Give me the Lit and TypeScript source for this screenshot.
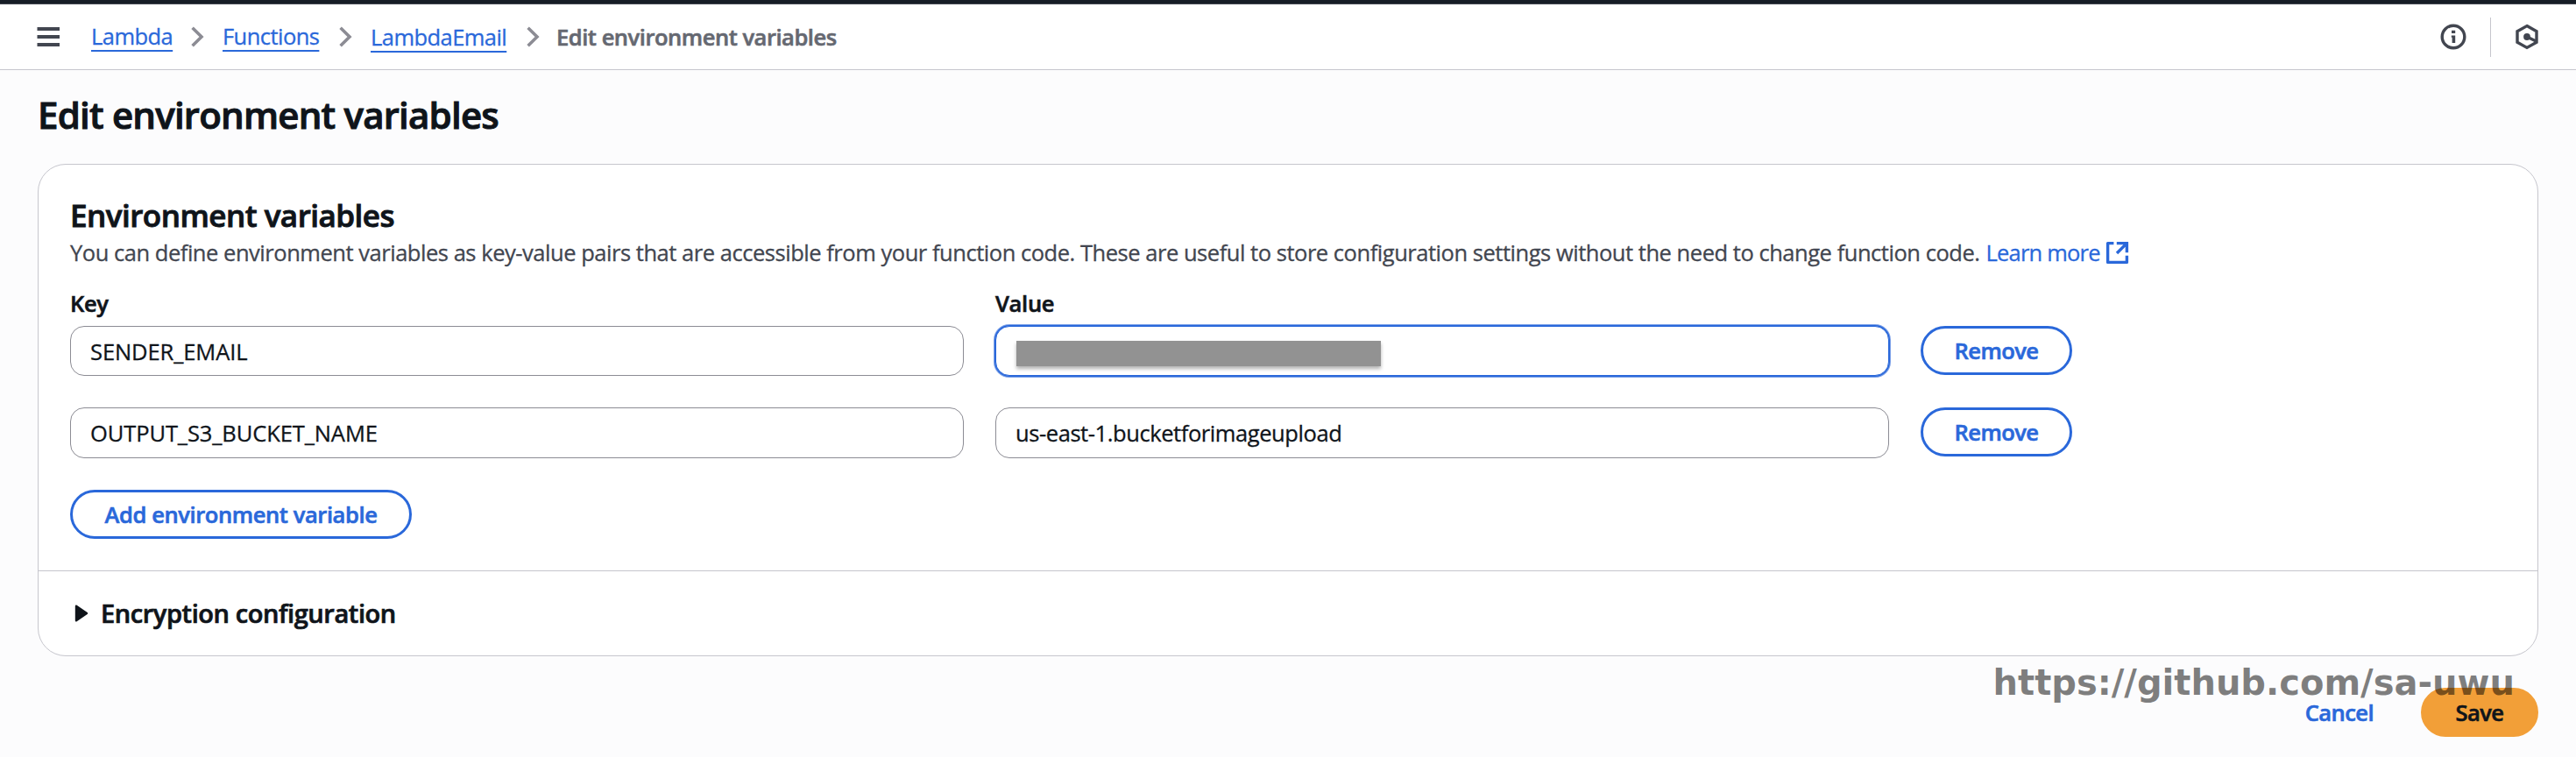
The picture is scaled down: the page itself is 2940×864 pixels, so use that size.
import { LitElement, html, css, nothing } from 'lit';
import { customElement, state } from 'lit/decorators.js';
import { classMap } from 'lit/directives/class-map.js';

interface EnvVariable {
  key: string;
  value: string;
  masked?: boolean;
  focused?: boolean;
}

const chevron = html`<svg class="chevron" width="18" height="28" viewBox="0 0 18 28" aria-hidden="true">
  <path d="M3.6 3.8 14 14 3.6 24.2" fill="none" stroke="#8c8c94" stroke-width="3.6" />
</svg>`;

@customElement('top-bar')
export class TopBar extends LitElement {
  static styles = css`
    :host {
      display: flex;
      align-items: center;
      box-sizing: border-box;
      height: 80px;
      padding: 0 42px 0 42px;
      background: #fff;
      border-top: 4px solid #161d26;
      border-bottom: 1px solid #c6c6cd;
      box-shadow: inset 0 1px 0 #424650;
    }
    .menu {
      display: block;
      margin: 1px 35px 0 0;
    }
    .crumbs {
      display: grid;
      grid-template-columns: 92px 58px 111px 58px 156px 58px auto;
      align-items: center;
      flex: 1;
      line-height: 40px;
      white-space: nowrap;
    }
    .crumb {
      color: #2a68da;
      letter-spacing: -0.55px;
      text-decoration: underline;
      text-decoration-thickness: 2px;
      text-underline-offset: 6px;
      text-decoration-skip-ink: none;
      -webkit-text-stroke: 0.3px currentColor;
    }
    .raised {
      margin-bottom: 2px;
    }
    .current {
      margin-left: -2px;
      color: #656871;
      font-weight: 600;
      letter-spacing: -0.46px;
      -webkit-text-stroke: 0.6px currentColor;
    }
    .chevron {
      display: block;
      justify-self: center;
    }
    .tools {
      display: flex;
      align-items: center;
      margin-top: 1px;
    }
    .tools svg {
      display: block;
    }
    .rule {
      width: 1px;
      height: 45px;
      margin: 0 27px;
      background: #c6c6cd;
    }
  `;

  render() {
    return html`
      <svg class="menu" width="27" height="26" viewBox="0 0 27 26">
        <path d="M.5 4h25.5M.5 13h25.5M.5 22h25.5" stroke="#424650" stroke-width="4" />
      </svg>
      <nav class="crumbs">
        <a class="crumb raised">Lambda</a>${chevron}
        <a class="crumb raised">Functions</a>${chevron}
        <a class="crumb">LambdaEmail</a>${chevron}
        <span class="current">Edit environment variables</span>
      </nav>
      <div class="tools">
        <svg width="30" height="30" viewBox="0 0 30 30">
          <circle cx="15" cy="15" r="12.8" fill="none" stroke="#424650" stroke-width="3.4" />
          <path d="M13 7.8h4.2v3.2H13zM12.8 13.4h4.4V22h-3.6v-6.2h-.8z" fill="#424650" />
        </svg>
        <div class="rule"></div>
        <svg width="28" height="30" viewBox="0 0 28 30">
          <path d="M14 2.6 25 8.8V21.2L14 27.4 3 21.2V8.8z" fill="none" stroke="#424650" stroke-width="3.4" />
          <circle cx="14" cy="15" r="3.9" fill="#424650" />
          <path d="M14 15l10.4 5" stroke="#424650" stroke-width="3.4" />
        </svg>
      </div>
    `;
  }
}

@customElement('app-root')
export class AppRoot extends LitElement {
  static styles = css`
    :host {
      display: block;
      position: relative;
      box-sizing: border-box;
      height: 864px;
      overflow: hidden;
      background: #fcfcfd;
      color: #0f141a;
      font-family: 'Open Sans', 'Noto Sans', sans-serif;
      font-size: 25.5px;
      line-height: 40px;
    }
    .page {
      padding: 23px 43px 0;
    }
    h1,
    h2,
    p {
      margin: 0;
    }
    h1 {
      font-size: 42px;
      font-weight: 600;
      line-height: 56px;
      letter-spacing: -0.78px;
      -webkit-text-stroke: 1px currentColor;
    }
    .card {
      box-sizing: border-box;
      margin-top: 28px;
      background: #fff;
      border: 1px solid #c6c6cd;
      border-radius: 32px;
    }
    .body {
      padding: 36px 36px;
    }
    h2 {
      font-size: 35px;
      font-weight: 600;
      line-height: 44px;
      letter-spacing: -0.5px;
      -webkit-text-stroke: 0.9px currentColor;
    }
    .intro {
      display: flex;
      align-items: center;
      gap: 7px;
      color: #424650;
      letter-spacing: -0.466px;
      white-space: nowrap;
      -webkit-text-stroke: 0.3px currentColor;
    }
    .learn {
      display: flex;
      align-items: center;
      gap: 6px;
      color: #2a68da;
    }
    .learn span {
      letter-spacing: -0.8px;
    }
    .grid {
      display: grid;
      grid-template-columns: 1020px 1020px 173px;
      column-gap: 36px;
      align-items: start;
    }
    .labels {
      margin-top: 18px;
      font-weight: 600;
    }
    .labels span {
      letter-spacing: -0.3px;
      -webkit-text-stroke: 0.6px currentColor;
    }
    .first {
      margin-top: 6px;
    }
    .next {
      margin-top: 36px;
    }
    .field {
      display: flex;
      align-items: center;
      box-sizing: border-box;
      height: 57px;
      padding: 0 22px;
      background: #fff;
      border: 1px solid #8c8c94;
      border-radius: 16px;
      -webkit-text-stroke: 0.3px currentColor;
    }
    .next .field {
      height: 58px;
    }
    .key {
      letter-spacing: -0.1px;
    }
    .value {
      letter-spacing: -0.42px;
    }
    .focused {
      border-color: #2a68da;
      box-shadow: 0 0 0 1px #2a68da, 0 0 0 2px #7ba0e8;
    }
    .mask {
      width: 416px;
      height: 29px;
      margin: 6px 0 0 1px;
      background: #929292;
      box-shadow: 0 3px 4px rgba(0, 0, 0, 0.3);
    }
    .button {
      display: inline-flex;
      align-items: center;
      justify-content: center;
      box-sizing: border-box;
      height: 56px;
      padding-bottom: 1px;
      color: #2a68da;
      border: 3px solid #2a68da;
      border-radius: 28px;
      font-weight: 600;
      letter-spacing: -0.55px;
      white-space: nowrap;
      -webkit-text-stroke: 0.6px currentColor;
    }
    .add {
      display: flex;
      width: 390px;
      margin-top: 36px;
      letter-spacing: -0.4px;
    }
    .encryption {
      display: flex;
      align-items: center;
      height: 96px;
      padding-left: 41px;
      border-top: 1px solid #c6c6cd;
      font-size: 29px;
      font-weight: 600;
      letter-spacing: -0.42px;
      -webkit-text-stroke: 0.7px currentColor;
    }
    .encryption svg {
      margin-right: 14px;
    }
    .footer {
      display: flex;
      justify-content: flex-end;
      margin-top: 36px;
    }
    .cancel {
      border-color: transparent;
      padding: 0 20px 1px;
      margin-right: 31px;
    }
    .save {
      width: 134px;
      color: #0f141a;
      background: #f29f38;
      border-color: #f29f38;
    }
    .watermark {
      position: absolute;
      right: 70px;
      top: 755px;
      font: bold 40px/48px 'DejaVu Sans', sans-serif;
      color: rgba(0, 0, 0, 0.5);
      white-space: nowrap;
    }
  `;

  @state()
  private variables: EnvVariable[] = [
    { key: 'SENDER_EMAIL', value: '', masked: true, focused: true },
    { key: 'OUTPUT_S3_BUCKET_NAME', value: 'us-east-1.bucketforimageupload' },
  ];

  private renderRow(item: EnvVariable, index: number) {
    return html`
      <div class=${classMap({ grid: true, first: index === 0, next: index > 0 })}>
        <div class="field key">${item.key}</div>
        <div class=${classMap({ field: true, value: true, focused: !!item.focused })}>
          ${item.masked ? html`<div class="mask"></div>` : nothing}${item.value}
        </div>
        <div class="button" role="button">Remove</div>
      </div>
    `;
  }

  render() {
    return html`
      <top-bar></top-bar>
      <main class="page">
        <h1>Edit environment variables</h1>
        <section class="card">
          <div class="body">
            <h2>Environment variables</h2>
            <p class="intro">
              <span>You can define environment variables as key-value pairs that are accessible from your function code. These are useful to store configuration settings without the need to change function code.</span>
              <a class="learn">
                <span>Learn more</span>
                <svg width="27" height="27" viewBox="0 0 27 27" fill="none" stroke="#2a68da" stroke-width="3.4">
                  <path d="M9.4 2.6H2.6V24.4H24.4V16.8" stroke-linejoin="round" />
                  <path d="M12.8 2.6H24.4V13.2M24.4 2.6 13 14" />
                </svg>
              </a>
            </p>
            <div class="grid labels"><span>Key</span><span>Value</span></div>
            ${this.variables.map((item, index) => this.renderRow(item, index))}
            <div class="button add" role="button">Add environment variable</div>
          </div>
          <div class="encryption">
            <svg width="16" height="20" viewBox="0 0 16 20">
              <path d="M2 1.8 14 10 2 18.2z" fill="#0f141a" stroke="#0f141a" stroke-width="2.4" stroke-linejoin="round" />
            </svg>
            <span>Encryption configuration</span>
          </div>
        </section>
        <div class="footer">
          <div class="button cancel" role="button">Cancel</div>
          <div class="button save" role="button">Save</div>
        </div>
      </main>
      <div class="watermark">https://github.com/sa-uwu</div>
    `;
  }
}
